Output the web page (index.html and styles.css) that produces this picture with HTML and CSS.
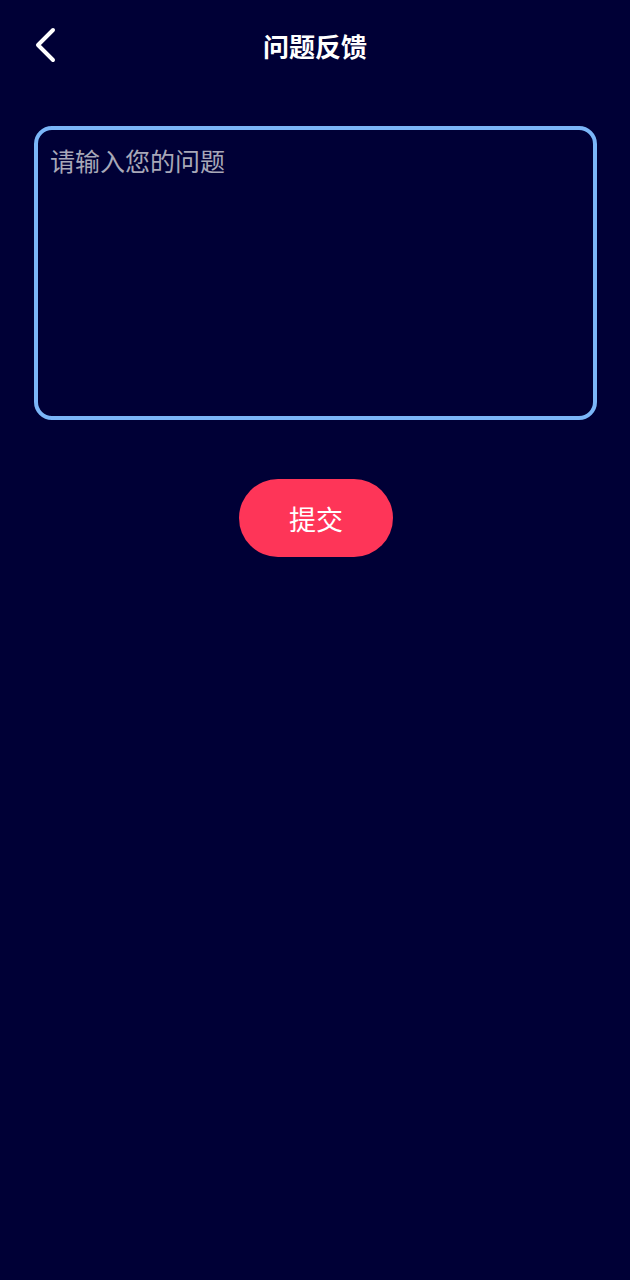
FILE: index.html
```html
<!DOCTYPE html>
<html lang="zh">
<head>
<meta charset="utf-8">
<link rel="stylesheet" href="styles.css">
</head>
<body>
<div class="page">
  <header class="nav">
    <span class="back">
      <svg width="24" height="36" viewBox="0 0 24 36"><path d="M19 3 L4 18 L19 33" fill="none" stroke="#fff" stroke-width="4" stroke-linecap="round" stroke-linejoin="round"/></svg>
    </span>
    <h1 class="title">问题反馈</h1>
  </header>
  <main class="content">
    <div class="box">
      <textarea class="input" placeholder="请输入您的问题"></textarea>
    </div>
    <div class="actions">
      <button class="submit">提交</button>
    </div>
  </main>
</div>
</body>
</html>
```

FILE: styles.css
```css
html, body {
  margin: 0;
  padding: 0;
  background: #000036;
  height: 100%;
}
body {
  font-family: "Noto Sans CJK SC", "Noto Sans", sans-serif;
}
.page {
  min-height: 1280px;
  background: #000036;
}
.nav {
  position: relative;
  height: 92px;
  display: flex;
  align-items: center;
  justify-content: center;
}
.back {
  position: absolute;
  left: 34px;
  top: 27px;
  width: 24px;
  height: 36px;
  display: block;
}
.back svg { display: block; }
.title {
  margin: 0;
  color: #fff;
  font-size: 26px;
  font-weight: 700;
  line-height: 1;
  letter-spacing: 0;
}
.content {
  padding: 34px 33px 0 34px;
}
.box {
  height: 294px;
  box-sizing: border-box;
  border: 4px solid #7bb6f8;
  border-radius: 18px;
  padding: 12px 12px;
}
.input {
  display: block;
  width: 100%;
  height: 100%;
  box-sizing: border-box;
  background: transparent;
  border: 0;
  outline: none;
  resize: none;
  padding: 0;
  margin: 0;
  font-family: "Noto Sans CJK SC", "Noto Sans", sans-serif;
  font-size: 25px;
  line-height: 36px;
  color: #fff;
}
.input::placeholder {
  color: #a8a8b8;
}
.actions {
  display: flex;
  justify-content: center;
  padding-top: 59px;
}
.submit {
  width: 154px;
  height: 78px;
  border: 0;
  border-radius: 39px;
  background: #fe3558;
  color: #fff;
  font-family: "Noto Sans CJK SC", "Noto Sans", sans-serif;
  font-size: 27px;
  padding: 0;
  margin-left: 1px;
}
```
